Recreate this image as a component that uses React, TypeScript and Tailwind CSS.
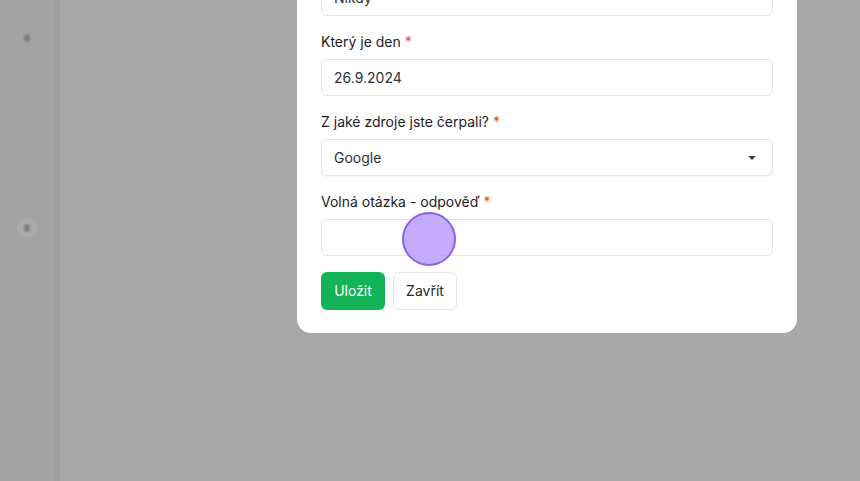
import React from 'react';

const Field: React.FC<{ label: string; children: React.ReactNode }> = ({ label, children }) => (
  <div>
    <label className="block text-sm leading-5 text-[#1c1c1f] mb-[7px]">
      {label} <span className="text-[#d4532c]">*</span>
    </label>
    {children}
  </div>
);

const inputCls =
  'w-full h-[37px] rounded-md border border-[#e4e4e7] bg-white px-3 text-sm text-[#303036] flex items-center';

const App: React.FC = () => {
  return (
    <div
      className="relative h-[481px] w-[860px] overflow-hidden bg-[#a8a8a8] flex"
      style={{ fontFamily: 'Inter, "Noto Sans", sans-serif' }}
    >
      {/* Dimmed sidebar behind the overlay */}
      <div className="w-[60px] shrink-0 bg-[#a3a3a3] border-r-[6px] border-[#9f9f9f] flex flex-col items-center">
        <div className="mt-[34px] w-[6px] h-[8px] rounded-full bg-[#7e7e7e] blur-[1px]" />
        <div className="mt-[176px] w-[20px] h-[20px] rounded-full bg-[#ababab] flex items-center justify-center">
          <div className="w-[6px] h-[8px] rounded-full bg-[#7e7e7e] blur-[1px]" />
        </div>
      </div>

      {/* Modal */}
      <div className="pl-[237px]">
        <div className="-mt-[45px] w-[500px] rounded-[14px] bg-white px-6 pt-6 pb-[23px]">
          <div className="space-y-4">
            <div className={inputCls}>Nikdy</div>
            <Field label="Který je den">
              <div className={inputCls}>26.9.2024</div>
            </Field>
            <Field label="Z jaké zdroje jste čerpali?">
              <div className={inputCls + ' justify-between shadow-[0_1px_2px_rgba(0,0,0,0.05)]'}>
                <span>Google</span>
                <svg width="10" height="6" viewBox="0 0 10 6" className="mr-[3px]">
                  <path d="M1 1h8L5 5z" fill="#3f3f46" />
                </svg>
              </div>
            </Field>
            <Field label="Volná otázka - odpověď">
              <div className={inputCls} />
            </Field>
          </div>
          <div className="mt-4 flex gap-2">
            <button className="h-[38px] w-16 rounded-md bg-[#13b358] text-sm text-white">
              Uložit
            </button>
            <button className="h-[38px] w-16 rounded-md border border-[#e4e4e7] bg-white text-sm text-[#27272a]">
              Zavřít
            </button>
          </div>
        </div>
      </div>

      {/* Click indicator */}
      <div className="absolute left-[402px] top-[212px] h-[54px] w-[54px] rounded-full border-2 border-[#8b62ea] bg-[#bc9cfa]/85" />
    </div>
  );
};

export default App;
